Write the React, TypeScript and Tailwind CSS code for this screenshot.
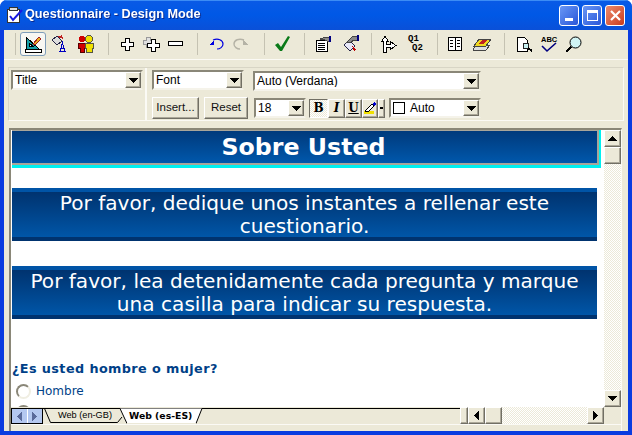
import type { ReactNode } from "react";

const ui = "font-['Liberation_Sans',sans-serif]";
const raised =
  "bg-[#ece9d8] border border-[#fff] border-r-[#716f64] border-b-[#716f64] shadow-[inset_-1px_-1px_0_#aca899]";

const Sep = ({ className = "" }: { className?: string }) => (
  <div className={`w-px h-[22px] bg-[#c5c2b2] shrink-0 ${className}`} />
);

const Ico = ({ w = 18, h = 18, children }: { w?: number; h?: number; children: ReactNode }) => (
  <svg width={w} height={h} viewBox={`0 0 ${w} ${h}`} className="block shrink-0" shapeRendering="crispEdges">
    {children}
  </svg>
);

const Arrow = ({ up = false }: { up?: boolean }) => (
  <svg width="9" height="5" viewBox="0 0 9 5" className="block">
    <path d={up ? "M4.5 0 L9 5 H0 Z" : "M0 0 H9 L4.5 5 Z"} fill="#000" shapeRendering="crispEdges" />
  </svg>
);

const SideArrow = ({ left = false, color = "#000" }: { left?: boolean; color?: string }) => (
  <svg width="5" height="9" viewBox="0 0 5 9" className="block">
    <path d={left ? "M5 0 V9 L0 4.5 Z" : "M0 0 V9 L5 4.5 Z"} fill={color} shapeRendering="crispEdges" />
  </svg>
);

const Combo = ({ label, className, box }: { label: ReactNode; className: string; box?: ReactNode }) => (
  <div
    className={`h-5 flex items-center bg-white border-2 border-[#8a8778] border-r-[#ece9d8] border-b-[#f5f3ea] shrink-0 ${className}`}
  >
    {box}
    <span className={`flex-1 pl-[2px] text-[12px] leading-none text-black ${ui} truncate`}>{label}</span>
    <div className={`w-[16px] h-[16px] flex items-center justify-center ${raised}`}>
      <Arrow />
    </div>
  </div>
);

const Banner = ({ lines, className }: { lines: string[]; className: string }) => (
  <div
    className={`mr-[7px] h-[53px] flex flex-col justify-center border-t-[4px] border-b-[4px] border-t-[#0054a6] border-b-[#00336f] bg-gradient-to-b from-[#00336f] to-[#0056a8] ${className}`}
  >
    {lines.map((l) => (
      <div key={l} className="text-center text-white text-[20.1px] leading-[23px] whitespace-nowrap font-['DejaVu_Sans',sans-serif]">
        {l}
      </div>
    ))}
  </div>
);

export default function App() {
  return (
    <div className="w-[632px] h-[435px] flex flex-col overflow-hidden rounded-t-[7px] bg-[#0a3ce0]">
      {/* title bar */}
      <div className="h-[30px] shrink-0 flex items-center pl-[6px] pr-[7px] bg-gradient-to-b from-[#0a5ae6] via-[#0058e6] to-[#0a50d8] shadow-[inset_0_1px_0_#3c8cf5]">
        <Ico w={17} h={18}>
          <rect x="1.5" y="3.5" width="12" height="13" fill="#fff" stroke="#333" />
          <rect x="3.5" y="1.5" width="8" height="3" fill="#ddd" stroke="#333" />
          <path d="M4 10 L7 14 L16 4" stroke="#1a1ae0" strokeWidth="2" fill="none" shapeRendering="auto" />
        </Ico>
        <span className={`ml-[2px] text-white font-bold text-[12.7px] ${ui} drop-shadow-[1px_1px_0_#0a2a90]`}>
          Questionnaire - Design Mode
        </span>
        <div className="ml-auto flex gap-[3px]">
          <div className="w-[20px] h-[21px] rounded-[3px] border border-white bg-gradient-to-br from-[#6a97f5] to-[#2a55d8] flex items-end pl-[5px] pb-[4px]">
            <div className="w-[8px] h-[3px] bg-white" />
          </div>
          <div className="w-[20px] h-[21px] rounded-[3px] border border-white bg-gradient-to-br from-[#6a97f5] to-[#2a55d8] flex items-center justify-center">
            <div className="w-[11px] h-[11px] border border-white border-t-[3px]" />
          </div>
          <div className="w-[20px] h-[21px] rounded-[3px] border border-white bg-gradient-to-br from-[#ec8a6c] to-[#c8391a] flex items-center justify-center">
            <svg width="11" height="11" viewBox="0 0 11 11">
              <path d="M1 1 L10 10 M10 1 L1 10" stroke="#fff" strokeWidth="2.2" />
            </svg>
          </div>
        </div>
      </div>

      <div className="flex-1 mx-[4px] mb-[4px] bg-[#ece9d8] flex flex-col min-h-0">
        {/* main toolbar */}
        <div className="h-[30px] shrink-0 flex items-center border-b border-[#fbfaf5] pl-[11px] pb-px">
          <Sep />
          <div className="ml-[4px] w-[26px] h-[24px] rounded-[3px] border border-[#7f9db9] bg-[#f8f7f2] flex items-center justify-center">
            <Ico w={20} h={18}>
              <path d="M3 2 V14 H16 Z M6 8 V11 H10 Z" fill="#17a0a8" fillRule="evenodd" stroke="#000" />
              <rect x="2" y="14" width="16" height="3" fill="#fff" stroke="#000" />
              <path d="M10 9 L16 2 L18 4 L12 10 Z" fill="#e8b020" stroke="#a02020" />
            </Ico>
          </div>
          <div className="ml-[4px]">
            <Ico w={18} h={18}>
              <path d="M2 5 L7 1 L12 6 L7 10 Z" fill="#ddd" stroke="#224" />
              <path d="M7 2 L12 0 L13 4 Z" fill="#c02020" />
              <path d="M9 16 H16 M10 16 L12.5 8 L15 16 M11 13 H14" stroke="#0000c0" fill="none" />
            </Ico>
          </div>
          <div className="ml-[9px]">
            <Ico w={18} h={18}>
              <circle cx="5" cy="4" r="3" fill="#d00000" />
              <path d="M1 8 H9 V13 H7 V17 H3 V13 H1 Z" fill="#d00000" stroke="#500" />
              <circle cx="12" cy="4" r="3.4" fill="#f0e000" stroke="#554" />
              <path d="M8 8 H16 V13 H15 V17 H9 V13 H8 Z" fill="#f0e000" stroke="#554" />
            </Ico>
          </div>
          <Sep className="ml-[13px]" />
          <div className="ml-[11px]">
            <Ico w={14} h={14}>
              <path d="M5 1 H9 V5 H13 V9 H9 V13 H5 V9 H1 V5 H5 Z" fill="#fff" stroke="#000" />
            </Ico>
          </div>
          <div className="ml-[8px]">
            <Ico w={18} h={16}>
              <path d="M4 1 H8 V4 H11 V8 H8 V11 H4 V8 H1 V4 H4 Z" fill="#e0e0e0" stroke="#999" />
              <path d="M9 3 H13 V7 H17 V11 H13 V15 H9 V11 H5 V7 H9 Z" fill="#fff" stroke="#000" />
            </Ico>
          </div>
          <div className="ml-[8px]">
            <Ico w={15} h={6}>
              <rect x="0.5" y="0.5" width="14" height="4" fill="#fff" stroke="#000" />
            </Ico>
          </div>
          <Sep className="ml-[14px]" />
          <div className="ml-[10px]">
            <Ico w={16} h={12}>
              <path d="M5 2 C10 0 15 2 15 6 C15 9 12 11 9 11" stroke="#0000e0" strokeWidth="1.2" fill="none" shapeRendering="auto" />
              <path d="M1 7 H6 V2 Z" fill="#0000e0" />
            </Ico>
          </div>
          <div className="ml-[9px]">
            <Ico w={16} h={12}>
              <path d="M11 2 C6 0 1 2 1 6 C1 9 4 11 7 11" stroke="#b5b3a6" strokeWidth="1.4" fill="none" shapeRendering="auto" />
              <path d="M15 7 H10 V2 Z" fill="#b5b3a6" />
            </Ico>
          </div>
          <Sep className="ml-[15px]" />
          <div className="ml-[10px]">
            <Ico w={16} h={16}>
              <path d="M0 9 L3 7 L6 11 L13 0 L15 1 L7 15 H5 Z" fill="#0a7a18" shapeRendering="auto" />
            </Ico>
          </div>
          <Sep className="ml-[13px]" />
          <div className="ml-[10px]">
            <Ico w={17} h={16}>
              <rect x="1" y="4" width="11" height="11" fill="#fff" stroke="#000" />
              <path d="M3 7 H10 M3 9 H10 M3 11 H10 M3 13 H10" stroke="#000" />
              <path d="M5 3 L11 1 H15 V5 H12 L10 4 Z" fill="#8a8a8a" stroke="#444" />
              <rect x="14" y="0" width="2" height="6" fill="#000080" />
            </Ico>
          </div>
          <div className="ml-[11px]">
            <Ico w={17} h={18}>
              <path d="M1 10 L6 5 L12 11 L7 16 Z" fill="#e8e8f8" stroke="#224" />
              <path d="M4 7 L10 1 H14 V5 H11 L8 7 Z" fill="#8a8a8a" stroke="#444" />
              <rect x="14" y="0" width="2" height="6" fill="#000080" />
              <path d="M9 11 L13 14 L11 16 Z" fill="#c00000" />
            </Ico>
          </div>
          <Sep className="ml-[11px]" />
          <div className="ml-[7px]">
            <Ico w={18} h={18}>
              <path d="M3 6 L6 1 L9 6 H7.5 V9 H11 V6 L17 10.5 L11 15 V12 H7.5 V17 H4.5 V6 Z" fill="#fff" stroke="#000" />
            </Ico>
          </div>
          <div className="ml-[11px] w-[18px] text-[9px] leading-[9px] font-bold font-['Liberation_Mono',monospace] text-black">
            <div>Q1</div>
            <div className="pl-[4px]">Q2</div>
          </div>
          <Sep className="ml-[11px]" />
          <div className="ml-[10px]">
            <Ico w={14} h={14}>
              <rect x="0.5" y="0.5" width="13" height="13" fill="#fff" stroke="#000" />
              <path d="M7 1 V13 M2 3.5 H5 M2 6.5 H5 M2 9.5 H5 M9 3.5 H12 M9 6.5 H12 M9 9.5 H12" stroke="#000" />
            </Ico>
          </div>
          <div className="ml-[11px]">
            <Ico w={18} h={13}>
              <path d="M0 11 L4 7 H17 L13 12 H0 Z" fill="#ddd" stroke="#444" />
              <path d="M1 8 L6 1 H18 L13 8 Z" fill="#f0d820" stroke="#444" />
              <path d="M6 6 L9 2 H14 L11 6 Z" fill="#c02020" />
            </Ico>
          </div>
          <Sep className="ml-[13px]" />
          <div className="ml-[11px]">
            <Ico w={17} h={16}>
              <path d="M1 1 H8 L11 4 V15 H1 Z" fill="#fff" stroke="#000" />
              <circle cx="10" cy="10" r="3" fill="#c8f0f0" stroke="#222" />
              <path d="M12 12 L16 15" stroke="#000" strokeWidth="2" />
            </Ico>
          </div>
          <div className="ml-[8px] w-[18px] relative h-[17px]">
            <div className="text-[7.5px] font-bold leading-none text-black font-['Liberation_Sans',sans-serif]">ABC</div>
            <svg width="16" height="11" viewBox="0 0 16 11" className="absolute left-0 top-[6px]">
              <path d="M1 4 L6 9 L15 1" stroke="#000080" strokeWidth="1.6" fill="none" />
            </svg>
          </div>
          <div className="ml-[6px]">
            <Ico w={17} h={17}>
              <circle cx="10.5" cy="6.5" r="5.5" fill="#d0f4f4" stroke="#000" shapeRendering="auto" />
              <path d="M6 11 L1 16" stroke="#000" strokeWidth="2.2" />
            </Ico>
          </div>
        </div>

        {/* format panel */}
        <div className="mt-[7px] ml-[4px] mr-[4px] h-[54px] shrink-0 flex border border-[#fbfaf5] border-l-[#d8d5c5] border-t-[#d8d5c5]">
          <div className="w-[138px] shrink-0 border-r-2 border-[#fbfaf5] pl-[2px] pt-[2px]">
            <Combo label="Title" className="w-[132px]" />
          </div>
          <div className="flex-1 pl-[5px] pt-[2px] flex flex-col gap-[6px]">
            <div className="flex gap-[9px]">
              <Combo label="Font" className="w-[92px]" />
              <Combo label="Auto (Verdana)" className="mt-px w-[228px]" />
            </div>
            <div className="flex items-center">
              <div className={`w-[47px] h-[22px] flex items-center justify-center text-[11.5px] text-[#111] ${ui} ${raised}`}>Insert...</div>
              <div className={`ml-[5px] w-[44px] h-[22px] flex items-center justify-center text-[11.5px] text-[#111] ${ui} ${raised}`}>Reset</div>
              <Combo label="18" className="ml-[6px] w-[52px]" />
              <div className="ml-[3px] flex">
                <div className="w-[19px] h-[19px] flex items-center justify-center text-[12px] font-bold font-['DejaVu_Serif',serif] bg-[repeating-conic-gradient(#fff_0_25%,#ece9d8_0_50%)] bg-[length:2px_2px] border border-[#716f64] border-r-white border-b-white text-black">B</div>
                <div className={`w-[17px] h-[19px] flex items-center justify-center text-[12px] font-bold italic font-['DejaVu_Serif',serif] text-black ${raised}`}>I</div>
                <div className={`w-[17px] h-[19px] flex items-center justify-center text-[12px] font-bold underline font-['DejaVu_Serif',serif] text-black ${raised}`}>U</div>
                <div className={`w-[16px] h-[19px] flex items-center justify-center ${raised}`}>
                  <Ico w={14} h={14}>
                    <rect x="1" y="10" width="10" height="3" fill="#f0e000" />
                    <path d="M2 10 L9 3 L11 5 L5 11 Z" fill="#fff" stroke="#000" />
                    <path d="M9 3 L11 1 L13 3 L11 5 Z" fill="#0000d0" />
                  </Ico>
                </div>
                <div className={`w-[7px] h-[19px] flex items-center justify-center ${raised}`}>
                  <div className="w-[3px] h-[2px] bg-black" />
                </div>
              </div>
              <Combo
                label="Auto"
                className="ml-[4px] w-[92px]"
                box={<div className="ml-[2px] w-[12px] h-[12px] border border-black bg-white shrink-0 mr-[3px]" />}
              />
            </div>
          </div>
        </div>

        {/* design surface */}
        <div className="mt-[7px] ml-[5px] mr-[6px] flex-1 min-h-0 flex flex-col border-t-2 border-l-2 border-[#8a8778] border-r border-r-[#fbfaf5] bg-white">
          <div className="flex-1 min-h-0 flex">
            <div className="flex-1 min-w-0 overflow-hidden">
              <div className="ml-px mr-[3px] h-[38px] border-b-[3px] border-r-2 border-[#00f0f0]">
                <div className="h-[35px] pt-px pr-[2px] flex items-center justify-center border-t border-t-[#a8a59a] border-r-2 border-r-[#a8a59a] border-b-2 border-b-[#a8a59a] bg-gradient-to-b from-[#003a7c] to-[#0058ac] text-white font-bold text-[23.7px] font-['DejaVu_Sans',sans-serif]">
                  Sobre Usted
                </div>
              </div>
              <div className="ml-px">
                <Banner className="mt-[20px]" lines={["Por favor, dedique unos instantes a rellenar este", "cuestionario."]} />
                <Banner className="mt-[25px]" lines={["Por favor, lea detenidamente cada pregunta y marque", "una casilla para indicar su respuesta."]} />
                <div className="mt-[42px] text-[12.8px] tracking-[0.4px] leading-[16px] font-bold text-[#003f87] font-['DejaVu_Sans',sans-serif]">
                  ¿Es usted hombre o mujer?
                </div>
                <div className="mt-[6px] flex items-center h-[16px]">
                  <div className="ml-[4px] w-[15px] h-[15px] rounded-full border-2 border-[#8a8778] border-r-[#f0eee2] border-b-[#f0eee2] bg-white" />
                  <span className="ml-[5px] text-[12px] text-[#003f87] font-['DejaVu_Sans',sans-serif]">Hombre</span>
                </div>
                <div className="mt-[6px] ml-[4px] w-[15px] h-[15px] rounded-full border-2 border-[#8a8778] border-r-[#f0eee2] border-b-[#f0eee2] bg-white" />
              </div>
            </div>
            {/* vertical scrollbar */}
            <div className="w-[17px] shrink-0 flex flex-col bg-[repeating-conic-gradient(#fff_0_25%,#ece9d8_0_50%)] bg-[length:2px_2px]">
              <div className={`h-[17px] shrink-0 flex items-center justify-center ${raised}`}>
                <Arrow up />
              </div>
              <div className={`h-[17px] shrink-0 ${raised}`} />
              <div className="flex-1" />
              <div className={`h-[17px] shrink-0 flex items-center justify-center ${raised}`}>
                <Arrow />
              </div>
            </div>
          </div>
          {/* tabs and horizontal scrollbar */}
          <div className="h-[17px] shrink-0 flex bg-[#ece9d8]">
            <div className="mt-px w-[32px] shrink-0 h-[16px] flex border border-black">
              <div className="flex-1 bg-[#b4c8f0] flex items-center justify-center border-r border-white">
                <SideArrow left color="#5a6a9a" />
              </div>
              <div className="flex-1 bg-[#b4c8f0] flex items-center justify-center">
                <SideArrow color="#5a6a9a" />
              </div>
            </div>
            <div className="relative w-[160px] shrink-0 h-[17px]">
              <svg width="160" height="17" viewBox="0 0 160 17" className="absolute inset-0">
                <path d="M0 1.5 H160" stroke="#000" fill="none" />
                <path d="M1.5 1.5 L7.5 15.5 H74.5 L79 10" stroke="#000" fill="none" />
                <path d="M77 1.5 L84 16.5 H153 L159 1.5" fill="#fff" stroke="#000" />
                <path d="M84 16.5 H153" stroke="#ece9d8" fill="none" />
              </svg>
              <span className={`absolute left-[15px] top-[1px] leading-[15px] text-[9.2px] whitespace-nowrap text-black ${ui}`}>Web (en-GB)</span>
              <span className="absolute left-[86px] top-[1px] leading-[15px] text-[9.3px] font-bold whitespace-nowrap text-black font-['DejaVu_Sans',sans-serif]">Web (es-ES)</span>
            </div>
            <div className="w-[257px] shrink-0 h-[2px] border-t border-black mt-px" />
            <div className={`w-[8px] shrink-0 ${raised}`} />
            <div className={`w-[17px] shrink-0 flex items-center justify-center ${raised}`}>
              <SideArrow left />
            </div>
            <div className={`w-[17px] shrink-0 ${raised}`} />
            <div className="flex-1 bg-[repeating-conic-gradient(#fff_0_25%,#ece9d8_0_50%)] bg-[length:2px_2px]" />
            <div className={`w-[17px] shrink-0 flex items-center justify-center ${raised}`}>
              <SideArrow />
            </div>
            <div className="w-[17px] shrink-0" />
          </div>
          <div className="h-[7px] shrink-0 bg-[#ece9d8] border-t border-[#fbfaf5]" />
        </div>
      </div>
    </div>
  );
}
